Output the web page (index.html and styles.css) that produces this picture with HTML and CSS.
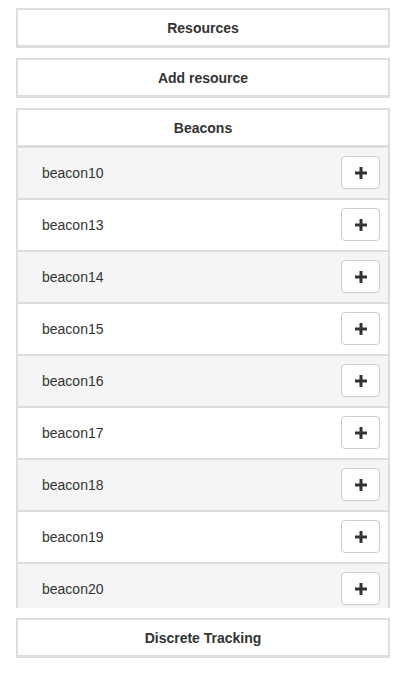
FILE: index.html
```html
<!DOCTYPE html>
<html>
<head>
<meta charset="utf-8">
<link rel="stylesheet" href="styles.css">
</head>
<body>
<div class="page">
  <div class="panel"><div class="title">Resources</div></div>
  <div class="panel"><div class="title">Add resource</div></div>
  <div class="panel scroll">
    <div class="title head">Beacons</div>
    <div class="row odd"><span>beacon10</span><button class="add"><svg width="12" height="12" viewBox="0 0 12 12"><path d="M4.5 0h3v4.5H12v3H7.5V12h-3V7.5H0v-3h4.5z" fill="#333"/></svg></button></div>
    <div class="row"><span>beacon13</span><button class="add"><svg width="12" height="12" viewBox="0 0 12 12"><path d="M4.5 0h3v4.5H12v3H7.5V12h-3V7.5H0v-3h4.5z" fill="#333"/></svg></button></div>
    <div class="row odd"><span>beacon14</span><button class="add"><svg width="12" height="12" viewBox="0 0 12 12"><path d="M4.5 0h3v4.5H12v3H7.5V12h-3V7.5H0v-3h4.5z" fill="#333"/></svg></button></div>
    <div class="row"><span>beacon15</span><button class="add"><svg width="12" height="12" viewBox="0 0 12 12"><path d="M4.5 0h3v4.5H12v3H7.5V12h-3V7.5H0v-3h4.5z" fill="#333"/></svg></button></div>
    <div class="row odd"><span>beacon16</span><button class="add"><svg width="12" height="12" viewBox="0 0 12 12"><path d="M4.5 0h3v4.5H12v3H7.5V12h-3V7.5H0v-3h4.5z" fill="#333"/></svg></button></div>
    <div class="row"><span>beacon17</span><button class="add"><svg width="12" height="12" viewBox="0 0 12 12"><path d="M4.5 0h3v4.5H12v3H7.5V12h-3V7.5H0v-3h4.5z" fill="#333"/></svg></button></div>
    <div class="row odd"><span>beacon18</span><button class="add"><svg width="12" height="12" viewBox="0 0 12 12"><path d="M4.5 0h3v4.5H12v3H7.5V12h-3V7.5H0v-3h4.5z" fill="#333"/></svg></button></div>
    <div class="row"><span>beacon19</span><button class="add"><svg width="12" height="12" viewBox="0 0 12 12"><path d="M4.5 0h3v4.5H12v3H7.5V12h-3V7.5H0v-3h4.5z" fill="#333"/></svg></button></div>
    <div class="row odd"><span>beacon20</span><button class="add"><svg width="12" height="12" viewBox="0 0 12 12"><path d="M4.5 0h3v4.5H12v3H7.5V12h-3V7.5H0v-3h4.5z" fill="#333"/></svg></button></div>
  </div>
  <div class="panel"><div class="title">Discrete Tracking</div></div>
</div>
</body>
</html>
```

FILE: styles.css
```css
* { box-sizing: border-box; }
html, body { margin: 0; padding: 0; background: #fff; }
body {
  font-family: "Liberation Sans", Arial, Helvetica, sans-serif;
  font-size: 14px;
  color: #333;
}
.page {
  display: flex;
  flex-direction: column;
  gap: 10px;
  padding: 8px 14px 0 16px;
}
.panel {
  border: 2px solid #ddd;
  border-bottom-width: 0;
  background: #fff;
}
.title {
  height: 38px;
  display: flex;
  align-items: center;
  justify-content: center;
  font-weight: bold;
  border-bottom: 3px solid #ddd;
}
.scroll {
  height: 500px;
  overflow: hidden;
  flex-shrink: 0;
}
.head { height: 38px; }
.row {
  height: 52px;
  display: flex;
  align-items: center;
  justify-content: space-between;
  padding: 0 8px 0 24px;
  border-bottom: 2px solid #ddd;
  background: #fff;
}
.row.odd { background: #f5f5f5; }
.add {
  width: 39px;
  height: 33px;
  border: 1px solid #ccc;
  border-radius: 4px;
  background: #fff;
  display: flex;
  align-items: center;
  justify-content: center;
  padding: 0;
  margin-top: -1px;
}
.add svg { display: block; }
```
